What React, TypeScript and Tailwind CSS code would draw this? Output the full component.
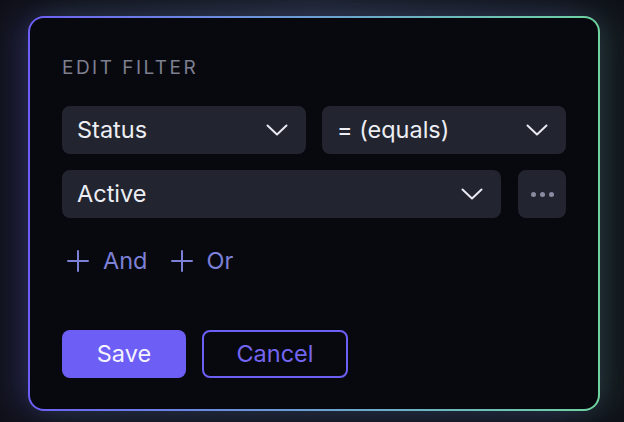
import React, { useState } from 'react';

const Chevron: React.FC = () => (
  <svg width="22" height="12" viewBox="0 0 22 12" fill="none" className="shrink-0">
    <path d="M1.5 1.5 11 10.5l9.5-9" stroke="#e8e9f0" strokeWidth="2" strokeLinecap="round" strokeLinejoin="round" />
  </svg>
);

const Plus: React.FC = () => (
  <svg width="22" height="22" viewBox="0 0 22 22" fill="none" className="shrink-0">
    <path d="M11 1v20M1 11h20" stroke="currentColor" strokeWidth="2" strokeLinecap="round" />
  </svg>
);

const Select: React.FC<{ value: string; className?: string }> = ({ value, className = '' }) => (
  <button
    className={`h-12 flex items-center justify-between pl-[15px] pr-[18px] rounded-lg bg-[#22242f] text-[23.5px] leading-8 text-[#eceef4] ${className}`}
  >
    <span>{value}</span>
    <Chevron />
  </button>
);

const App: React.FC = () => {
  const [field] = useState('Status');
  const [op] = useState('= (equals)');
  const [value] = useState('Active');

  return (
    <div
      className="w-[624px] h-[422px] overflow-hidden bg-[#0f1118] bg-[radial-gradient(ellipse_at_top,#1b1e2b_0%,#0f1118_60%)] pt-4 pl-7"
      style={{ fontFamily: 'Inter, "Noto Sans", sans-serif' }}
    >
      <div className="w-[572px] h-[395px] rounded-2xl p-[2px] bg-gradient-to-r from-[#6d5ef6] to-[#6fd3a0] shadow-[-12px_0_32px_rgba(109,94,246,0.22),12px_0_32px_rgba(111,211,160,0.16)]">
        <div className="h-full rounded-[14px] bg-[#08090e] px-8 pt-[38px]">
          <h2 className="text-[19px] leading-6 tracking-[0.13em] text-[#7d7f90]">EDIT FILTER</h2>

          <div className="mt-[26px] flex gap-4">
            <Select value={field} className="flex-1" />
            <Select value={op} className="flex-1" />
          </div>

          <div className="mt-4 flex gap-[17px]">
            <Select value={value} className="flex-1" />
            <button className="w-12 h-12 rounded-lg bg-[#22242f] flex items-center justify-center gap-[4px]">
              <span className="w-[5px] h-[5px] rounded-full bg-[#8a8ba0]" />
              <span className="w-[5px] h-[5px] rounded-full bg-[#8a8ba0]" />
              <span className="w-[5px] h-[5px] rounded-full bg-[#8a8ba0]" />
            </button>
          </div>

          <div className="mt-[26px] flex items-center gap-[23px] text-[23.5px] leading-[33px] text-[#7c80d6] pl-[5px]">
            <button className="flex items-center gap-[14px]">
              <Plus />
              <span>And</span>
            </button>
            <button className="flex items-center gap-[14px]">
              <Plus />
              <span>Or</span>
            </button>
          </div>

          <div className="mt-[53px] flex gap-4">
            <button className="w-[124px] h-12 rounded-lg bg-[#6d5ef6] text-[23.5px] text-[#f4f3ff]">Save</button>
            <button className="w-[146px] h-12 rounded-lg border-2 border-[#6d5ef6] text-[23.5px] text-[#7466f3]">Cancel</button>
          </div>
        </div>
      </div>
    </div>
  );
};

export default App;
